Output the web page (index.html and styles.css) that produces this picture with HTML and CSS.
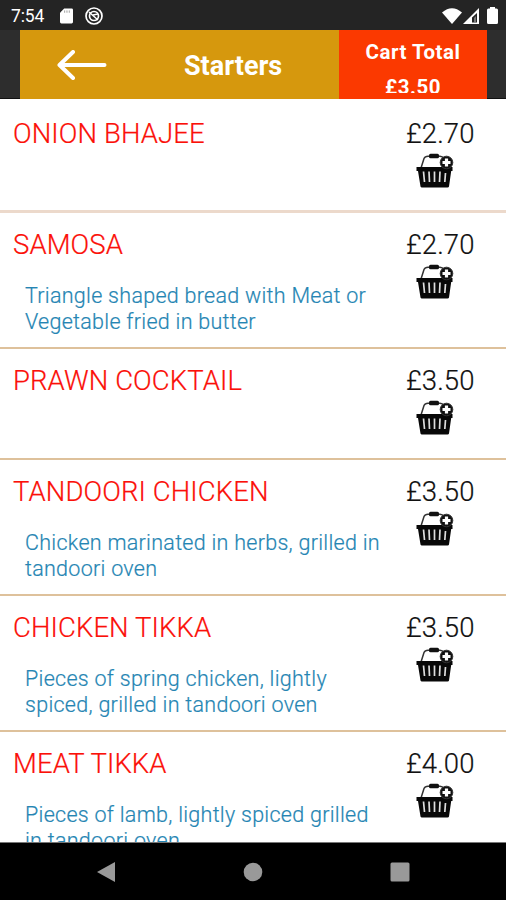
FILE: index.html
```
<!DOCTYPE html>
<html lang="en">
<head>
<meta charset="utf-8">
<title>Starters</title>
<link rel="stylesheet" href="styles.css">
</head>
<body>
<svg class="defs" width="0" height="0" aria-hidden="true">
  <symbol id="basket" viewBox="0 0 38 36">
    <path d="M5 15L8 5.5Q9 3.3 12 3.3H24Q26.5 3.3 28 6" fill="none" stroke="#333" stroke-width="1.5"/>
    <rect x="13" y="0.700" width="10" height="4.5" rx="1.5" fill="#111"/>
    <path d="M.5 14H36.500V18H35.200L33 33.500Q32.800 34.500 31.500 34.500H6Q4.700 34.500 4.500 33.500L2 18H.5Z" fill="#080808"/>
    <path d="M7.500 18.500L8.500 29M13 18.500L13.500 29M18.500 18.500V29M24 18.500L23.500 29M29.500 20L28.800 29" stroke="#ddd" stroke-width="1.700"/>
    <circle cx="30.500" cy="9.500" r="6.300" fill="#111" stroke="#333" stroke-width="1"/>
    <path d="M30.500 5.500V13.500M26.500 9.500H34.500" stroke="#fff" stroke-width="3.200"/>
  </symbol>
</svg>
<div class="screen">
  <div class="status">
    <span class="time">7:54</span>
    <svg class="sd" viewBox="0 0 14 16"><path d="M4.500 0H12.500Q14 0 14 1.500V14.500Q14 16 12.500 16H1.500Q0 16 0 14.500V4.500Z" fill="#fff"/><path d="M5 2V4.500M7.500 2V4.500M10 2V4.500" stroke="#999" stroke-width="1"/></svg>
    <svg class="ring" viewBox="0 0 18 18"><circle cx="9" cy="9" r="8" fill="none" stroke="#fff" stroke-width="1.700"/><circle cx="9" cy="9" r="4.500" fill="none" stroke="#fff" stroke-width="1.700"/><path d="M4 5L13 13M8 8L13 7" stroke="#fff" stroke-width="1.500"/></svg>
    <span class="grow"></span>
    <svg class="wifi" viewBox="0 0 20 16"><path d="M0 4.500Q10-4 20 4.500L10 16Z" fill="#fff"/></svg>
    <svg class="signal" viewBox="0 0 16 16"><path d="M0 16L16 0V16Z" fill="#fff"/><path d="M9 14.500V9.500L14 5V14.500Z" fill="#242424"/><path d="M11 14V10L13 8V14Z" fill="#777"/></svg>
    <svg class="battery" viewBox="0 0 11 17"><path d="M3 1.500V0H8V1.500H9.500Q11 1.500 11 3V15.500Q11 17 9.500 17H1.500Q0 17 0 15.500V3Q0 1.500 1.500 1.500Z" fill="#fff"/></svg>
  </div>
  <header class="bar">
    <div class="nav">
      <svg class="back" viewBox="0 0 50 30"><path d="M47.500 15H3M16 2L2.500 15L16 28" fill="none" stroke="#fff" stroke-width="4" stroke-linecap="round" stroke-linejoin="round"/></svg>
      <h1>Starters</h1>
    </div>
    <div class="cart"><div class="cart-line label">Cart Total</div><div class="cart-line total">£3.50</div></div>
  </header>
  <main class="list">
    <section class="item short first"><div class="info"><h2>ONION BHAJEE</h2></div><div class="buy"><span>£2.70</span><svg><use href="#basket"/></svg></div></section>
    <section class="item"><div class="info"><h2>SAMOSA</h2><p>Triangle shaped bread with Meat or<br>Vegetable fried in butter</p></div><div class="buy"><span>£2.70</span><svg><use href="#basket"/></svg></div></section>
    <section class="item short"><div class="info"><h2>PRAWN COCKTAIL</h2></div><div class="buy"><span>£3.50</span><svg><use href="#basket"/></svg></div></section>
    <section class="item"><div class="info"><h2>TANDOORI CHICKEN</h2><p>Chicken marinated in herbs, grilled in<br>tandoori oven</p></div><div class="buy"><span>£3.50</span><svg><use href="#basket"/></svg></div></section>
    <section class="item"><div class="info"><h2>CHICKEN TIKKA</h2><p>Pieces of spring chicken, lightly<br>spiced, grilled in tandoori oven</p></div><div class="buy"><span>£3.50</span><svg><use href="#basket"/></svg></div></section>
    <section class="item"><div class="info"><h2>MEAT TIKKA</h2><p>Pieces of lamb, lightly spiced grilled<br>in tandoori oven</p></div><div class="buy"><span>£4.00</span><svg><use href="#basket"/></svg></div></section>
  </main>
  <nav class="system">
    <svg viewBox="0 0 20 20"><path d="M1 10L19 0V20Z" fill="#999"/></svg>
    <svg viewBox="0 0 20 20"><circle cx="10" cy="10" r="9.300" fill="#999"/></svg>
    <svg viewBox="0 0 20 20"><rect x="0.500" y="0.500" width="19" height="19" rx="1.500" fill="#999"/></svg>
  </nav>
</div>
</body>
</html>
```
FILE: styles.css
```
* { box-sizing: border-box; margin: 0; padding: 0; }
body { font-family: Roboto, sans-serif; background: #fff; }
svg { display: block; flex: none; }
.defs { position: absolute; }
.screen { width: 506px; height: 900px; display: flex; flex-direction: column; overflow: hidden; }
.status { height: 30px; flex: none; background: #242424; color: #fff; display: flex; align-items: center; padding: 1px 8px 0 11px; }
.time { width: 49px; font-size: 17.5px; line-height: 30px; letter-spacing: -0.1px; }
.sd { width: 13px; height: 16px; margin-right: 12px; }
.ring { width: 18px; height: 18px; }
.grow { flex: 1; }
.wifi { width: 20px; height: 16px; margin-right: 1px; }
.signal { width: 16px; height: 16px; margin-right: 8px; }
.battery { width: 11px; height: 17px; }
.bar { height: 69px; flex: none; background: #2d2d2d; padding: 0 19px 0 20px; display: flex; border-bottom: 1px solid #111; }
.nav { width: 319px; height: 69px; background: #d6980d; display: flex; align-items: center; padding-left: 37px; }
.back { width: 50px; height: 30px; margin-top: 1px; }
h1 { margin-left: 77px; padding-top: 3px; font-size: 27px; line-height: 30px; font-weight: 700; color: #fff; white-space: nowrap; }
.cart { width: 148px; height: 69px; background: #fb3900; color: #fff; font-weight: 700; font-size: 20.5px; text-align: center; padding-top: 10px; }
.cart-line { height: 18.5px; line-height: 24px; overflow: hidden; letter-spacing: 0.5px; }
.label { margin-bottom: 16px; }
.list { flex: 1; min-height: 0; overflow: hidden; }
.item { height: 136px; display: flex; padding: 15px 0 0 13px; border-bottom: 2px solid #dec19b; }
.short { height: 111px; }
.first { height: 114px; padding-top: 18px; border-bottom: 3px solid #ecd9cb; }
.info { width: 390px; }
h2 { font-size: 27.5px; line-height: 34px; font-weight: 300; letter-spacing: 0.1px; color: #fb1009; white-space: nowrap; -webkit-text-stroke: 0.2px #fb1009; }
p { margin: 21px 0 0 12px; font-size: 21.5px; line-height: 25.7px; letter-spacing: 0.28px; color: #2585b3; font-weight: 300; white-space: nowrap; -webkit-text-stroke: 0.2px #2585b3; }
.buy { width: 71px; color: #111; display: flex; flex-direction: column; }
.buy span { margin-left: 3px; font-size: 27.5px; line-height: 34px; font-weight: 300; letter-spacing: 0.1px; white-space: nowrap; -webkit-text-stroke: 0.2px #111; }
.buy svg { width: 38px; height: 36px; margin: 2px 0 0 13px; }
.system { height: 58px; flex: none; background: #000; border-top: 1px solid #777; display: flex; justify-content: space-between; align-items: center; padding: 0 96px; }
.system svg { width: 20px; height: 20px; }
```
